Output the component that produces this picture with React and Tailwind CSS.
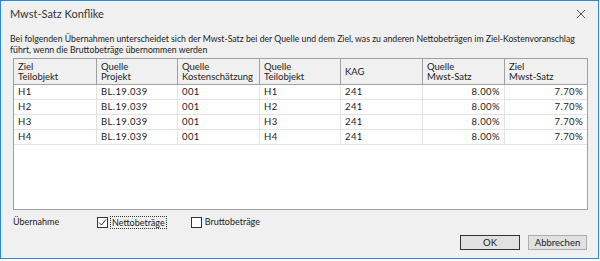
import React from 'react';

const cols = [
  { top: 'Ziel', bottom: 'Teilobjekt', w: 'w-[83px]' },
  { top: 'Quelle', bottom: 'Projekt', w: 'w-[81px]' },
  { top: 'Quelle', bottom: 'Kostenschätzung', w: 'w-[82px]' },
  { top: 'Quelle', bottom: 'Teilobjekt', w: 'w-[81px]' },
  { top: '', bottom: 'KAG', w: 'w-[82px]' },
  { top: 'Quelle', bottom: 'Mwst-Satz', w: 'w-[82px]' },
  { top: 'Ziel', bottom: 'Mwst-Satz', w: 'w-[83px]' },
];

const rows = [
  ['H1', 'BL.19.039', '001', 'H1', '241', '8.00%', '7.70%'],
  ['H2', 'BL.19.039', '001', 'H2', '241', '8.00%', '7.70%'],
  ['H3', 'BL.19.039', '001', 'H3', '241', '8.00%', '7.70%'],
  ['H4', 'BL.19.039', '001', 'H4', '241', '8.00%', '7.70%'],
];

function Check({ checked }) {
  return (
    <span className="w-[11px] h-[11px] border border-[#333] bg-white flex items-center justify-center">
      {checked && (
        <svg width="9" height="9" viewBox="0 0 9 9">
          <path d="M1 4.5 L3.5 7 L8 1.5" fill="none" stroke="#333" strokeWidth="1" />
        </svg>
      )}
    </span>
  );
}

export default function App() {
  return (
    <div className="w-[600px] h-[261px] bg-white" style={{ fontFamily: 'Lato, "Noto Sans", sans-serif' }}>
      <div className="w-[599px] h-[259px] bg-[#f0f0f0] border border-[#2b88d8] flex flex-col text-[#1a1a1a]">
        {/* Title bar */}
        <div className="h-[26px] flex items-center justify-between pl-[9px] pr-[12px]">
          <span className="text-[11px] text-[#333]">Mwst-Satz Konflike</span>
          <svg width="10" height="10" viewBox="0 0 10 10">
            <path d="M1 1 L9 9 M9 1 L1 9" stroke="#555" strokeWidth="1" />
          </svg>
        </div>

        {/* Description */}
        <div className="px-[9px] mt-[6px] text-[8.7px] leading-[11px] whitespace-nowrap">
          Bei folgenden Übernahmen unterscheidet sich der Mwst-Satz bei der Quelle und dem Ziel, was zu anderen Nettobeträgen im Ziel-Kostenvoranschlag
          <br />
          führt, wenn die Bruttobeträge übernommen werden
        </div>

        {/* Grid */}
        <div className="ml-[12px] mt-[3px] w-[575px] h-[152px] bg-white border border-[#a0a0a0] overflow-hidden text-[9.5px]">
          <div className="flex bg-[#f0f0f0] border-b border-[#a0a0a0]">
            {cols.map((c, i) => (
              <div key={i} className={`${c.w} h-[25px] shrink-0 px-[4px] leading-[10px] border-r border-[#a0a0a0] flex flex-col justify-center text-[#222]`}>
                <span>{c.top}</span>
                <span>{c.bottom}</span>
              </div>
            ))}
          </div>
          {rows.map((r, ri) => (
            <div key={ri} className="flex border-b border-[#e3e3e3]">
              {r.map((v, ci) => (
                <div
                  key={ci}
                  className={`${cols[ci].w} h-[14px] shrink-0 px-[4px] leading-[14px] border-r border-[#e3e3e3] tracking-[0.4px] ${ci >= 5 ? 'text-right' : ''}`}
                >
                  {v}
                </div>
              ))}
            </div>
          ))}
        </div>

        {/* Options */}
        <div className="flex items-center h-[14px] mt-[5px] pl-[12px] text-[9px]">
          <span className="w-[84px]">Übernahme</span>
          <Check checked />
          <span className="ml-[2px] px-[1px] border border-dotted border-[#333] leading-[11px]">Nettobeträge</span>
          <span className="ml-[24px]"><Check /></span>
          <span className="ml-[3px]">Bruttobeträge</span>
        </div>

        {/* Buttons */}
        <div className="flex justify-end gap-[8px] mt-[6px] pr-[11px] text-[9.5px]">
          <button className="w-[60px] h-[15px] bg-[#e1e1e1] border border-[#333] leading-[13px]">OK</button>
          <button className="w-[59px] h-[15px] bg-[#e1e1e1] border border-[#adadad] leading-[13px]">Abbrechen</button>
        </div>
      </div>
    </div>
  );
}
